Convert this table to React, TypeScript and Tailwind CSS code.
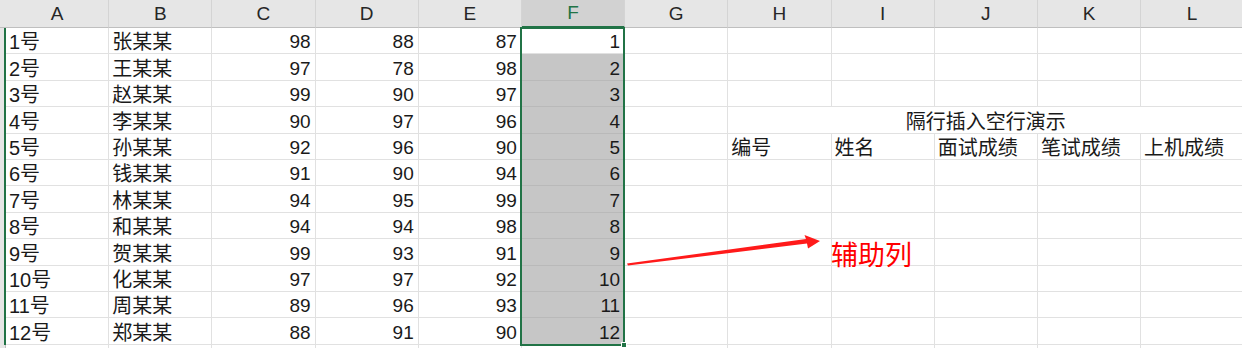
import React from 'react';

const cols = ['A', 'B', 'C', 'D', 'E', 'F', 'G', 'H', 'I', 'J', 'K', 'L'];

const rows: [string, string, number, number, number, number][] = [
  ['1号', '张某某', 98, 88, 87, 1],
  ['2号', '王某某', 97, 78, 98, 2],
  ['3号', '赵某某', 99, 90, 97, 3],
  ['4号', '李某某', 90, 97, 96, 4],
  ['5号', '孙某某', 92, 96, 90, 5],
  ['6号', '钱某某', 91, 90, 94, 6],
  ['7号', '林某某', 94, 95, 99, 7],
  ['8号', '和某某', 94, 94, 98, 8],
  ['9号', '贺某某', 99, 93, 91, 9],
  ['10号', '化某某', 97, 97, 92, 10],
  ['11号', '周某某', 89, 96, 93, 11],
  ['12号', '郑某某', 88, 91, 90, 12],
];

const cell = 'h-[26.4px] border-r border-b border-[#e1e1e1] flex items-end overflow-hidden whitespace-nowrap leading-[22px]';
const txt = `${cell} justify-start pl-[3px] text-[20px]`;
const num = `${cell} justify-end pr-[4px] text-[19px]`;

const Blank = () => <div className={cell} />;

const App: React.FC = () => {
  return (
    <div
      className="relative w-[1242px] h-[348px] overflow-hidden bg-white text-[#1a1a1a]"
      style={{ fontFamily: '"Liberation Sans", "Noto Sans CJK SC", sans-serif' }}
    >
      <div className="grid grid-cols-[6px_repeat(12,103.2px)]">
        {/* column headers */}
        <div className="h-[28px] bg-[#e6e6e6] border-b border-[#bfbfbf]" />
        {cols.map((c) => (
          <div
            key={c}
            className={`h-[28px] flex items-end justify-center pb-[1px] leading-[24px] text-[19px] border-r border-[#d4d4d4] ${
              c === 'F' ? 'bg-[#d2d2d2] text-[#217346] border-b-2 border-b-[#217346]' : 'bg-[#e6e6e6] text-[#262626] border-b border-b-[#bfbfbf]'
            }`}
          >
            {c}
          </div>
        ))}

        {/* body rows */}
        {Array.from({ length: 13 }).map((_, r) => {
          const d = rows[r];
          return (
            <React.Fragment key={r}>
              <div className={`h-[26.4px] bg-[#e6e6e6] ${d ? 'border-r-2 border-[#217346]' : 'border-r border-[#bfbfbf]'}`} />
              {d ? (
                <>
                  <div className={txt}>{d[0]}</div>
                  <div className={txt}>{d[1]}</div>
                  <div className={num}>{d[2]}</div>
                  <div className={num}>{d[3]}</div>
                  <div className={num}>{d[4]}</div>
                  <div className={`${num} ${r === 0 ? 'bg-white' : 'bg-[#c6c6c6] border-b-[#b9b9b9]'}`}>{d[5]}</div>
                </>
              ) : (
                <>
                  <Blank />
                  <Blank />
                  <Blank />
                  <Blank />
                  <Blank />
                  <Blank />
                </>
              )}
              <Blank />
              {r === 3 ? (
                <div className={`${cell} col-span-5 justify-center text-[20px]`}>隔行插入空行演示</div>
              ) : r === 4 ? (
                ['编号', '姓名', '面试成绩', '笔试成绩', '上机成绩'].map((h) => (
                  <div key={h} className={txt}>
                    {h}
                  </div>
                ))
              ) : (
                <>
                  <Blank />
                  <Blank />
                  <Blank />
                  <Blank />
                  <Blank />
                </>
              )}
            </React.Fragment>
          );
        })}
      </div>

      {/* selection frame around F1:F12 */}
      <div className="absolute left-[520px] top-[27px] w-[105px] h-[319px] border-2 border-[#217346] pointer-events-none" />
      <div className="absolute left-[621px] top-[342px] w-[6px] h-[6px] bg-[#217346] border border-white" />

      {/* arrow */}
      <svg className="absolute left-0 top-0 pointer-events-none" width="1242" height="348">
        <polygon
          points="627,263.5 806,239 804.5,235 820,241 808,248.5 807,243.5 628,265.5"
          fill="#ff1a1a"
        />
      </svg>

      <div className="absolute left-[831px] top-[240px] text-[27px] leading-[32px] text-[#ff0000]">辅助列</div>
    </div>
  );
};

export default App;
